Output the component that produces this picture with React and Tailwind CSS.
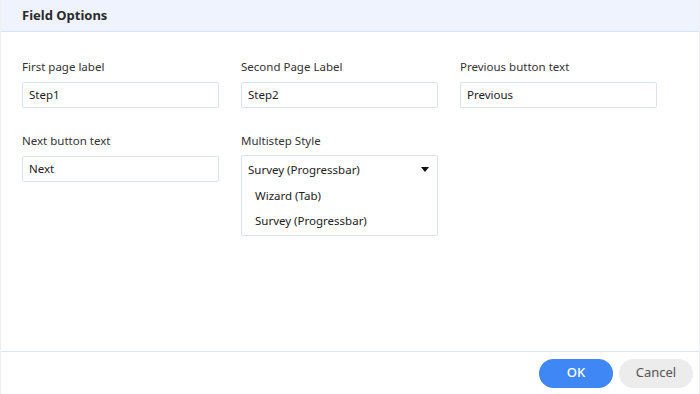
import React from 'react';

const inputCls = "w-[197px] h-[26px] border border-[#d8e2f3] rounded-[2px] px-[6px] text-[11.5px] text-[#222] flex items-center bg-white";

function Field({ label, value }) {
  return (
    <div className="w-[197px]">
      <div className="text-[11.5px] text-[#333] h-[16px] leading-[16px] mb-[7px]">{label}</div>
      <div className={inputCls}>{value}</div>
    </div>
  );
}

export default function App() {
  return (
    <div className="w-[700px] h-[394px] bg-white flex flex-col border-x border-[#eef0f6] font-['Noto_Sans',sans-serif] text-[#333]">
      {/* header */}
      <div className="h-[32px] shrink-0 bg-[#eef3fd] border-b border-[#d9e3f5] flex items-center pl-[21px]">
        <span className="text-[13px] font-bold text-[#2b2b2b]">Field Options</span>
      </div>

      {/* body */}
      <div className="flex-1 pl-[21px] pt-[27px] flex flex-col gap-[25px]">
        <div className="flex gap-[22px]">
          <Field label="First page label" value="Step1" />
          <Field label="Second Page Label" value="Step2" />
          <Field label="Previous button text" value="Previous" />
        </div>
        <div className="flex gap-[22px] items-start">
          <Field label="Next button text" value="Next" />
          <div className="w-[197px]">
            <div className="text-[11.5px] text-[#333] h-[16px] leading-[16px] mb-[6px]">Multistep Style</div>
            <div className="w-[197px] border border-[#d8e2f3] rounded-[2px] bg-white text-[11.5px] text-[#222]">
              <div className="h-[27px] flex items-center justify-between px-[6px]">
                <span>Survey (Progressbar)</span>
                <span className="w-0 h-0 border-l-[4px] border-r-[4px] border-t-[5px] border-l-transparent border-r-transparent border-t-[#111] mr-[2px]"></span>
              </div>
              <div className="h-[25px] flex items-center px-[13px]">Wizard (Tab)</div>
              <div className="h-[25px] flex items-center px-[13px] mb-[2px]">Survey (Progressbar)</div>
            </div>
          </div>
        </div>
      </div>

      {/* footer */}
      <div className="h-[43px] shrink-0 border-t border-[#dfe3f3] flex items-center justify-end gap-[6px] pr-[6px]">
        <button className="w-[74px] h-[29px] rounded-full bg-[#3f87f5] text-white text-[13px] font-medium">OK</button>
        <button className="w-[74px] h-[29px] rounded-full bg-[#ececec] text-[#555] text-[13px]">Cancel</button>
      </div>
    </div>
  );
}
